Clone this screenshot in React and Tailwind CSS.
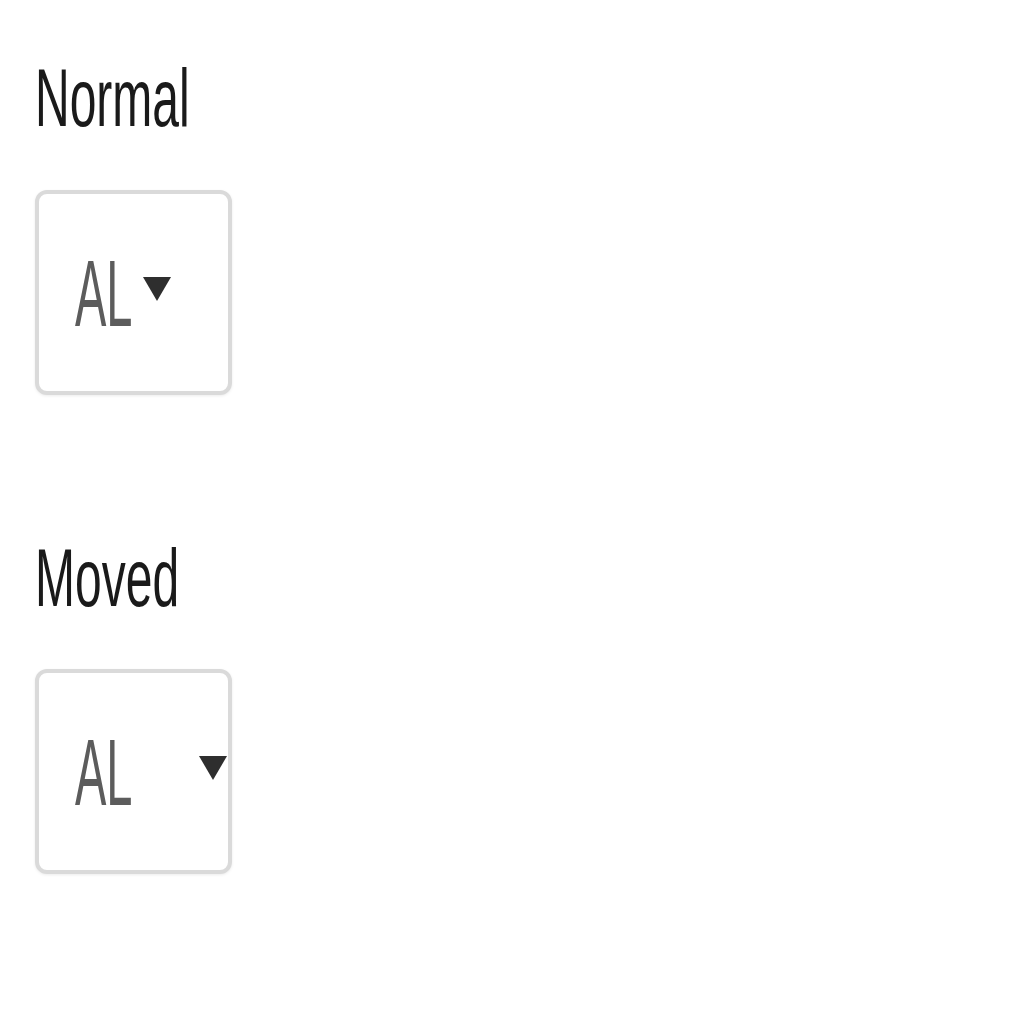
import React from "react";

function Caret() {
  return (
    <svg width="30" height="26" viewBox="0 0 30 26" className="shrink-0">
      <polygon points="1,1 29,1 15,25" fill="#2e2e2e" />
    </svg>
  );
}

function Field({ label, moved, labelMt, boxMt }) {
  return (
    <div className="flex flex-col">
      <div
        className={`h-[48px] text-[48px] leading-[48px] text-[#1a1a1a] scale-y-[1.7] origin-center w-max ${labelMt}`}
        style={{ fontFamily: '"Liberation Sans", Arial, sans-serif' }}
      >
        {label}
      </div>
      <div
        className={`${boxMt} w-[197px] h-[205px] rounded-[12px] border-[4px] border-[#dadada] bg-white shadow-[0_1px_3px_rgba(0,0,0,0.08)] flex items-center pl-[36px] ${moved ? "justify-between" : ""}`}
      >
        <span
          className="h-[47px] text-[47px] leading-[47px] text-[#5c5c5c] scale-y-[2] origin-center"
          style={{ fontFamily: '"Liberation Sans", Arial, sans-serif' }}
        >
          AL
        </span>
        <span className={`${moved ? "" : "ml-[9px]"} mb-[8px] flex`}>
          <Caret />
        </span>
      </div>
    </div>
  );
}

export default function App() {
  return (
    <div className="w-[1024px] h-[1024px] bg-white pl-[35px] pt-[75px]">
      <Field label="Normal" labelMt="" boxMt="mt-[67px]" />
      <Field label="Moved" moved labelMt="mt-[160px]" boxMt="mt-[66px]" />
    </div>
  );
}
